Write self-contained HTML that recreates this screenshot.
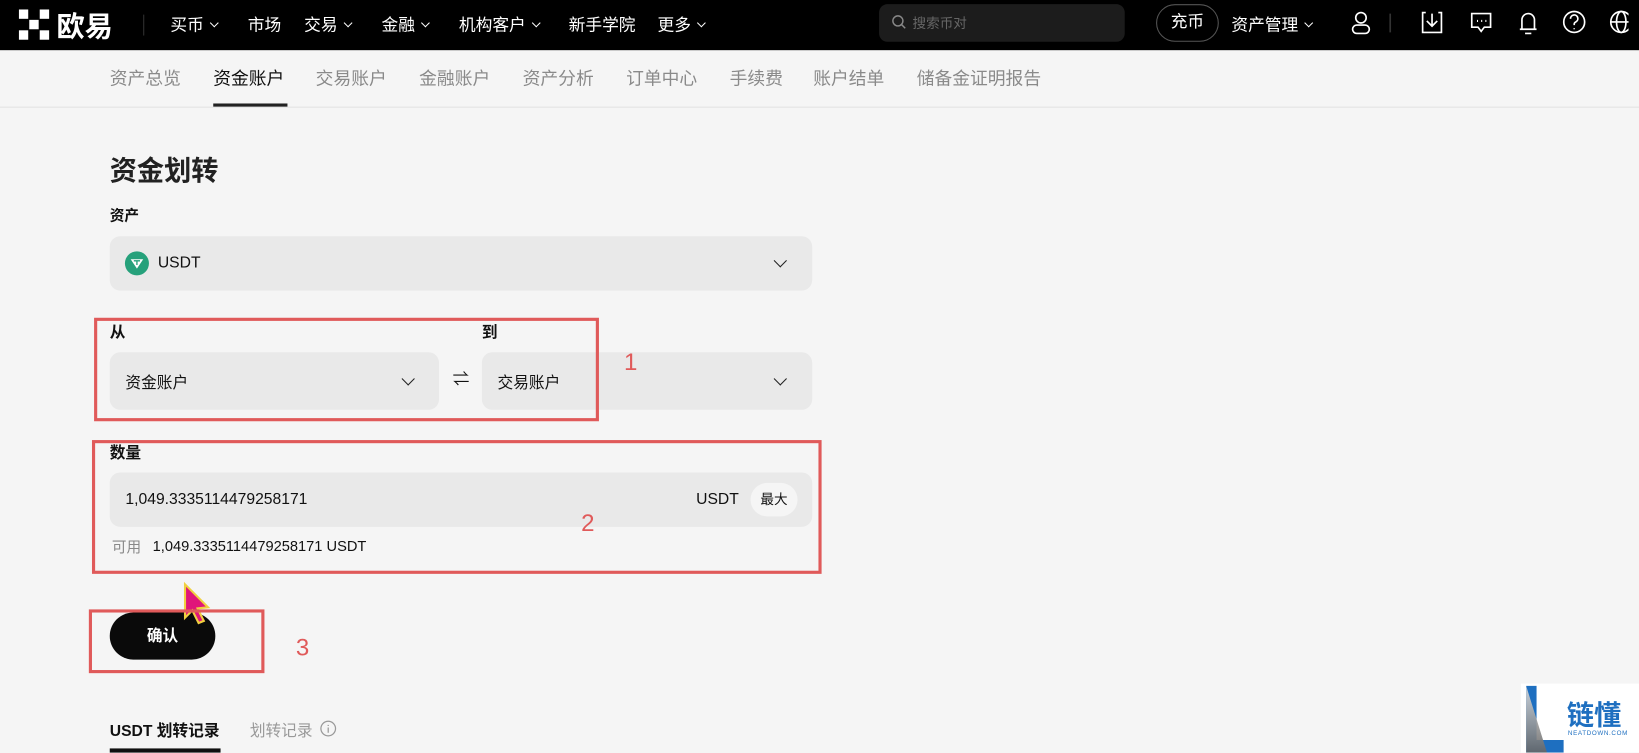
<!DOCTYPE html>
<html><head><meta charset="utf-8"><style>
html,body{margin:0;padding:0;width:1639px;height:753px;overflow:hidden;background:#f5f5f5;}
#w{position:absolute;left:0;top:0;width:1568px;height:720px;transform:scale(1.04528);transform-origin:0 0;font-family:"Liberation Sans","Noto Sans CJK SC",sans-serif;color:#111;}
.a{position:absolute;white-space:nowrap;}
.hd{position:absolute;left:0;top:0;width:1568px;height:48px;background:#000;}
.nv{color:#fff;font-size:16px;top:10px;}
.tb{font-size:17px;color:#8a8a8a;top:61px;}
.sel{position:absolute;background:#e9e9e9;border-radius:10px;}
.rb{position:absolute;border:3px solid #e05a5a;box-sizing:border-box;}
.rn{color:#e05a5a;font-size:23px;}
.chev{position:absolute;width:8px;height:8px;border-right:1.6px solid #222;border-bottom:1.6px solid #222;transform:rotate(45deg);}
.sc{display:inline-block;width:5px;height:5px;border-right:1.2px solid #fff;border-bottom:1.2px solid #fff;transform:rotate(45deg);margin-left:7px;vertical-align:4px;}
</style></head><body><div id="w">
<div class="hd"></div>
<svg class="a" style="left:18px;top:9px" width="30" height="30" viewBox="0 0 30 30" fill="#fff"><rect x="0" y="0" width="9" height="9"/><rect x="20" y="0" width="9" height="9"/><rect x="10" y="10" width="9" height="9"/><rect x="0" y="20" width="9" height="9"/><rect x="20" y="20" width="9" height="9"/></svg>
<div class="a" style="left:54px;top:4px;color:#fff;font-size:27px;font-weight:bold">欧易</div>
<div class="a" style="left:137px;top:14px;width:1px;height:20px;background:#333"></div>
<div class="a nv" style="left:163px">买币<span class="sc"></span></div>
<div class="a nv" style="left:237px">市场</div>
<div class="a nv" style="left:291px">交易<span class="sc"></span></div>
<div class="a nv" style="left:365px">金融<span class="sc"></span></div>
<div class="a nv" style="left:439px">机构客户<span class="sc"></span></div>
<div class="a nv" style="left:544px">新手学院</div>
<div class="a nv" style="left:629px">更多<span class="sc"></span></div>
<div class="a" style="left:841px;top:4px;width:235px;height:36px;background:#1c1c1c;border-radius:8px"></div>
<svg class="a" style="left:853px;top:14px" width="14" height="14" viewBox="0 0 14 14" fill="none" stroke="#888" stroke-width="1.4"><circle cx="6" cy="6" r="4.8"/><path d="M9.5 9.5L13 13"/></svg>
<div class="a" style="left:873px;top:12px;color:#666;font-size:13px">搜索币对</div>
<div class="a" style="left:1106px;top:4px;width:58px;height:34px;border:1px solid #555;border-radius:19px;color:#fff;font-size:16px;text-align:center;line-height:34px">充币</div>
<div class="a nv" style="left:1178px">资产管理<span class="sc"></span></div>
<svg class="a" style="left:1290px;top:9px" width="268" height="26" viewBox="0 0 268 26" fill="none" stroke="#fff" stroke-width="1.6">
<circle cx="12" cy="8" r="5"/><rect x="4" y="15" width="16" height="8" rx="4"/>
<path d="M40 4v18" stroke="#333"/>
<path d="M74 3h-3v19h18V3h-3M80 4v12M75 11l5 5 5-5"/>
<path d="M118 4h18v13h-6l-3 4-3-4h-6z"/><path d="M123 11h1M127 11h1M131 11h1" stroke-width="2"/>
<path d="M166 19V10a6 6 0 0 1 12 0v9h2H164M169 23h6"/>
<circle cx="216" cy="12" r="10"/><path d="M212.5 9a3.5 3.5 0 1 1 5 3c-1.5.8-1.5 1.5-1.5 3M216 18v1"/>
<circle cx="261" cy="12" r="10"/><ellipse cx="261" cy="12" rx="4.5" ry="10"/><path d="M251 12h20"/>
</svg>
<div class="a" style="left:0;top:102px;width:1568px;height:1px;background:#e2e2e2"></div>
<div class="a tb" style="left:105px">资产总览</div>
<div class="a tb" style="left:204px;color:#111">资金账户</div>
<div class="a" style="left:204px;top:99px;width:71px;height:3px;background:#222"></div>
<div class="a tb" style="left:302px">交易账户</div>
<div class="a tb" style="left:401px">金融账户</div>
<div class="a tb" style="left:500px">资产分析</div>
<div class="a tb" style="left:599px">订单中心</div>
<div class="a tb" style="left:698px">手续费</div>
<div class="a tb" style="left:778px">账户结单</div>
<div class="a tb" style="left:877px">储备金证明报告</div>

<div class="a" style="left:105px;top:143px;font-size:26px;font-weight:bold;color:#222">资金划转</div>
<div class="a" style="left:105px;top:196px;font-size:14px;font-weight:bold">资产</div>
<div class="sel" style="left:105px;top:226px;width:672px;height:52px"></div>
<svg class="a" style="left:119px;top:240px" width="24" height="24" viewBox="0 0 24 24"><circle cx="12" cy="12" r="11.5" fill="#26a17b"/><path d="M6 8h12l-6 9z" fill="#fff"/><path d="M9 9.5h6M12 9.5v4" stroke="#26a17b" stroke-width="1.3"/></svg>
<div class="a" style="left:151px;top:243px;font-size:15px">USDT</div>
<div class="chev" style="left:742px;top:245px"></div>

<div class="a" style="left:105px;top:307px;font-size:15px;font-weight:bold">从</div>
<div class="a" style="left:461px;top:307px;font-size:15px;font-weight:bold">到</div>
<div class="sel" style="left:105px;top:337px;width:315px;height:55px"></div>
<div class="sel" style="left:461px;top:337px;width:316px;height:55px"></div>
<div class="a" style="left:120px;top:355px;font-size:15px">资金账户</div>
<div class="a" style="left:476px;top:355px;font-size:15px">交易账户</div>
<div class="chev" style="left:386px;top:358px"></div>
<div class="chev" style="left:742px;top:358px"></div>
<div class="a" style="left:433px;top:349px;font-size:16px">⇌</div>

<div class="a" style="left:105px;top:422px;font-size:15px;font-weight:bold">数量</div>
<div class="sel" style="left:105px;top:452px;width:672px;height:52px"></div>
<div class="a" style="left:120px;top:469px;font-size:15px">1,049.3335114479258171</div>
<div class="a" style="left:666px;top:469px;font-size:15px">USDT</div>
<div class="a" style="left:718px;top:462px;width:45px;height:32px;border-radius:16px;background:#f5f5f5;font-size:13px;text-align:center;line-height:32px">最大</div>
<div class="a" style="left:107px;top:513px;font-size:14px;color:#888">可用</div>
<div class="a" style="left:146px;top:514px;font-size:14px">1,049.3335114479258171 USDT</div>

<div class="a" style="left:105px;top:586px;width:101px;height:45px;border-radius:23px;background:#0a0a0a;color:#fff;font-size:15px;text-align:center;line-height:45px;font-weight:bold">确认</div>
<svg class="a" style="left:172px;top:556px" width="32" height="42" viewBox="0 0 32 42"><path d="M5 3l22 22-10 1 6 12-5 2-6-12-7 7z" fill="#e0157a" stroke="#f0d040" stroke-width="2"/></svg>

<div class="rb" style="left:90px;top:304px;width:483px;height:99px"></div>
<div class="rb" style="left:88px;top:421px;width:698px;height:128px"></div>
<div class="rb" style="left:85px;top:583px;width:168px;height:61px"></div>
<div class="a rn" style="left:597px;top:333px">1</div>
<div class="a rn" style="left:556px;top:487px">2</div>
<div class="a rn" style="left:283px;top:606px">3</div>

<div class="a" style="left:105px;top:688px;font-size:15px;font-weight:bold">USDT 划转记录</div>
<div class="a" style="left:105px;top:716px;width:106px;height:4px;background:#111"></div>
<div class="a" style="left:239px;top:688px;font-size:15px;color:#999">划转记录</div>
<svg class="a" style="left:306px;top:689px" width="16" height="16" viewBox="0 0 16 16" fill="none" stroke="#999" stroke-width="1.2"><circle cx="8" cy="8" r="7"/><path d="M8 7v5M8 4.5v1"/></svg>

<div class="a" style="left:1455px;top:654px;width:113px;height:66px;background:#fff"></div>
<svg class="a" style="left:1460px;top:656px" width="36" height="64" viewBox="0 0 36 64"><defs><linearGradient id="g" x1="0" y1="0" x2="0" y2="1"><stop offset="0" stop-color="#ddd"/><stop offset="1" stop-color="#666"/></linearGradient></defs><path d="M0 0h10v52h26v12H0z" fill="#1e6fc0"/><path d="M0 0l20 64H0z" fill="url(#g)" opacity=".9"/></svg>
<div class="a" style="left:1499px;top:664px;font-size:26px;color:#1e6fc0;font-weight:bold">链懂</div>
<div class="a" style="left:1500px;top:699px;font-size:6px;color:#1e6fc0;letter-spacing:.6px">NEATDOWN.COM</div>
</div></body></html>
